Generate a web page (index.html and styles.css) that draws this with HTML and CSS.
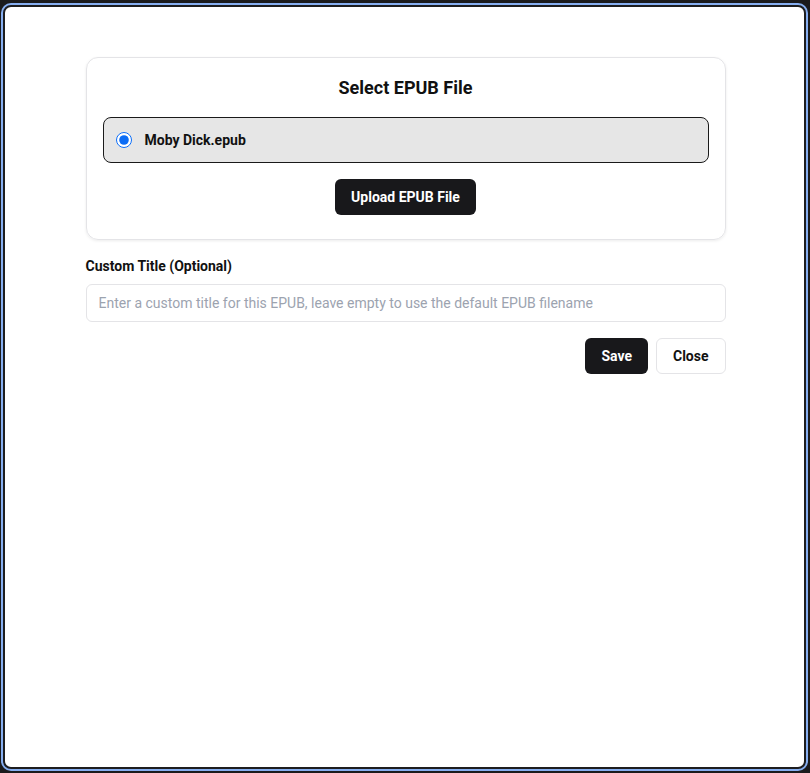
FILE: index.html
```
<!DOCTYPE html>
<html lang="en">
<head>
    <meta charset="UTF-8">
    <meta name="viewport" content="width=device-width, initial-scale=1.0">
    <title>Select EPUB File</title>
    <link rel="stylesheet" href="styles.css">
</head>
<body>
    <div class="dialog">
        <div class="dialog-body">
            <div class="file-card">
                <h2 class="file-card-title">Select EPUB File</h2>
                <label class="file-item">
                    <input type="radio" name="epub" checked>
                    <span>Moby Dick.epub</span>
                </label>
                <div class="upload-row">
                    <button class="btn btn-dark">Upload EPUB File</button>
                </div>
            </div>

            <label class="field-label" for="customTitle">Custom Title (Optional)</label>
            <input class="text-input" type="text" id="customTitle" placeholder="Enter a custom title for this EPUB, leave empty to use the default EPUB filename">

            <div class="actions">
                <button class="btn btn-dark">Save</button>
                <button class="btn btn-light">Close</button>
            </div>
        </div>
    </div>
</body>
</html>
```

FILE: styles.css
```
* {
    box-sizing: border-box;
}

body {
    margin: 0;
    padding: 5px 4px 4px 3px;
    background-color: #1b1b1d;
    font-family: Roboto, "Liberation Sans", sans-serif;
    color: #111;
    height: 100vh;
}

.dialog {
    height: 100%;
    background-color: #fff;
    border: 2px solid #1d1d1f;
    border-radius: 8px;
    box-shadow: 0 0 0 2px #86aef0; /* focus ring */
}

.dialog-body {
    max-width: 642px;
    margin: 0 auto;
    padding: 50px 0 0 2px;
}

.file-card {
    border: 1px solid #e4e4e7;
    border-radius: 12px;
    padding: 16px 16px 24px;
    box-shadow: 0 1px 3px rgba(0, 0, 0, 0.08);
}

.file-card-title {
    margin: 0 0 15px;
    text-align: center;
    font-size: 18px;
    line-height: 28px;
    font-weight: 700;
}

.file-item {
    display: flex;
    align-items: center;
    gap: 13px;
    height: 46px;
    padding: 0 12px;
    background-color: #e6e6e6;
    border: 1px solid #1a1a1a;
    border-radius: 8px;
    font-size: 14px;
    font-weight: 700;
    cursor: pointer;
}

.file-item input {
    margin: 0;
    width: 16px;
    height: 16px;
    accent-color: #0b6cf5;
}

.upload-row {
    display: flex;
    justify-content: center;
    margin-top: 16px;
}

.btn {
    height: 36px;
    padding: 0 16px;
    border-radius: 6px;
    font-family: inherit;
    font-size: 14px;
    font-weight: 700;
    cursor: pointer;
}

.btn-dark {
    background-color: #18181b;
    color: #fff;
    border: none;
}

.btn-light {
    background-color: #fff;
    color: #111;
    border: 1px solid #e4e4e7;
}

.field-label {
    display: block;
    margin-top: 16px;
    font-size: 14px;
    line-height: 20px;
    font-weight: 700;
}

.text-input {
    display: block;
    width: 100%;
    height: 38px;
    margin-top: 8px;
    padding: 0 12px;
    border: 1px solid #e4e4e7;
    border-radius: 6px;
    font-family: inherit;
    font-size: 14px;
    outline: none;
}

.text-input::placeholder {
    color: #9ca3af;
}

.actions {
    display: flex;
    justify-content: flex-end;
    gap: 8px;
    margin-top: 16px;
}
```
